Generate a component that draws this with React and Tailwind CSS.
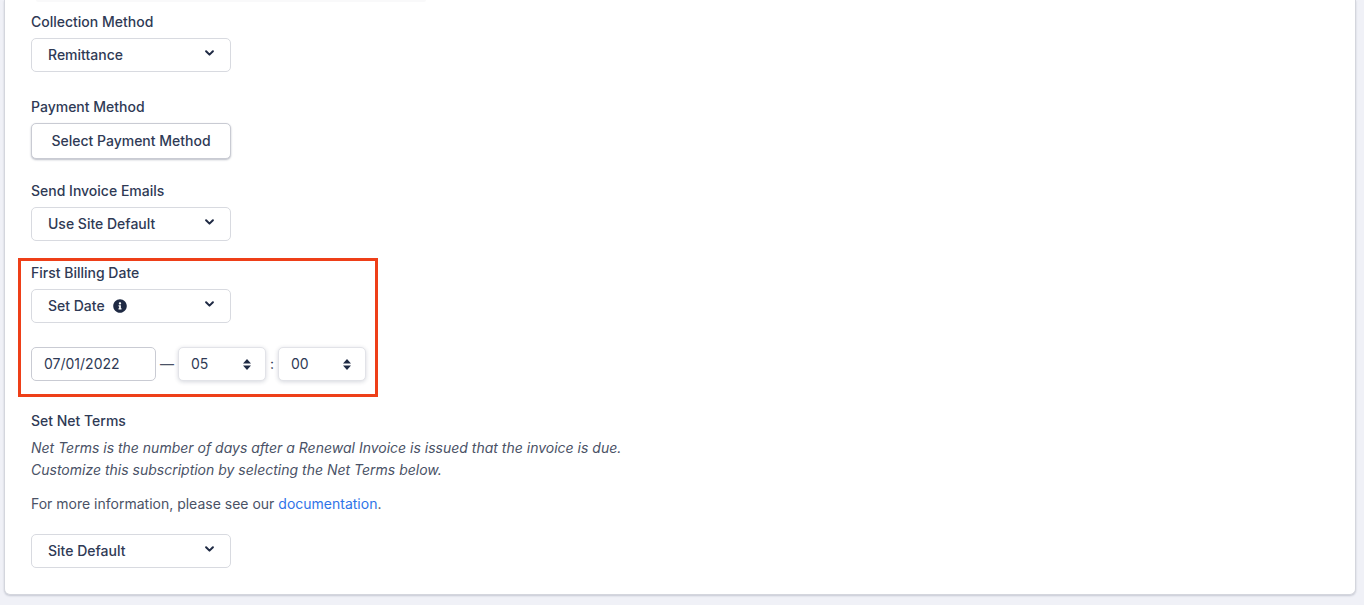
import React from "react";
import { FaInfoCircle } from "react-icons/fa";

function Chevron() {
  return (
    <svg width="9" height="6" viewBox="0 0 9 6" className="absolute right-[16px] top-[11px] text-[#1f2a44]">
      <path d="M1.1 1.2 4.5 4.6l3.4-3.4" fill="none" stroke="currentColor" strokeWidth="2" strokeLinecap="round" strokeLinejoin="round" />
    </svg>
  );
}

function Updown() {
  return (
    <svg width="8" height="11" viewBox="0 0 8 11" className="text-[#1f2a44]">
      <path d="M4 0 8 4.4H0zM4 11 0 6.6h8z" fill="currentColor" />
    </svg>
  );
}

function Label({ children }) {
  return <div className="text-sm leading-5 font-medium text-[#2f3a55] mb-[6px]">{children}</div>;
}

function Select({ children }) {
  return (
    <div className="relative w-[200px] h-[34px] flex items-center gap-2 pl-[16px] bg-white border border-[#d8dae0] rounded-[5px] text-sm font-medium text-[#2f3a55]">
      {children}
      <Chevron />
    </div>
  );
}

function TimeSelect({ value }) {
  return (
    <div className="w-[88px] h-[34px] flex items-center justify-between pl-[12px] pr-[14px] bg-white border border-[#e2e3e8] rounded-[5px] shadow-[0_1px_4px_rgba(30,40,70,0.18)] text-sm text-[#2f3a55]">
      {value}
      <Updown />
    </div>
  );
}

export default function App() {
  return (
    <div className="h-[605px] overflow-hidden bg-[#f0f1f7] font-['Inter',sans-serif]">
      <div className="ml-[4px] w-[1352px] h-[595px] bg-white border border-[#d4d6dd] border-t-0 rounded-b-[6px] shadow-[0_1px_2px_rgba(30,40,70,0.2)] pl-[26px]">
        <div className="w-[390px] h-[2px] ml-[5px] mb-[10px] bg-[#f9f9fa] rounded-b-sm"></div>
        <Label>Collection Method</Label>
        <Select>Remittance</Select>

        <div className="mt-[25px]">
          <Label>Payment Method</Label>
          <button className="w-[200px] h-[36px] bg-white border border-[#c9cbd3] rounded-[5px] shadow-[0_1px_2px_rgba(30,40,70,0.3)] text-sm font-medium text-[#2f3a55]">
            Select Payment Method
          </button>
        </div>

        <div className="mt-[22px]">
          <Label>Send Invoice Emails</Label>
          <Select>Use Site Default</Select>
        </div>

        <div className="mt-[17px] -ml-[13px] w-[360px] h-[139px] border-[3px] border-[#ee3f18] pl-[10px] pt-[2px]">
          <Label>First Billing Date</Label>
          <Select>
            Set Date
            <FaInfoCircle size={14} className="text-[#1f2a44]" />
          </Select>
          <div className="flex items-center mt-[24px] text-sm text-[#2f3a55]">
            <div className="w-[125px] h-[34px] flex items-center pl-[12px] border border-[#c9cbd3] rounded-[5px]">07/01/2022</div>
            <span className="w-[22px] text-center text-[#4a5266]">—</span>
            <TimeSelect value="05" />
            <span className="w-[12px] text-center">:</span>
            <TimeSelect value="00" />
          </div>
        </div>

        <div className="mt-[14px]">
          <Label>Set Net Terms</Label>
          <p className="text-sm leading-[22px] italic text-[#4a5266]">
            Net Terms is the number of days after a Renewal Invoice is issued that the invoice is due.
            <br />
            Customize this subscription by selecting the Net Terms below.
          </p>
          <p className="mt-[12px] text-sm leading-[22px] text-[#4a5266]">
            For more information, please see our <a className="text-[#2f74e8]">documentation</a>.
          </p>
        </div>

        <div className="mt-[19px]">
          <Select>Site Default</Select>
        </div>
      </div>
    </div>
  );
}
